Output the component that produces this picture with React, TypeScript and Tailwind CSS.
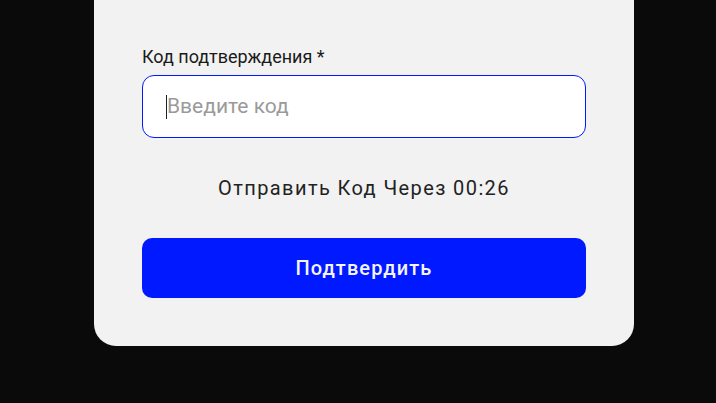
import { useState } from "react";

export default function App() {
  const [code, setCode] = useState("");

  return (
    <div
      className="h-[403px] w-full bg-[#0a0a0a] flex overflow-hidden"
      style={{ fontFamily: "Roboto, 'Noto Sans', sans-serif" }}
    >
      <div className="ml-[94px] w-[540px] h-[346px] bg-[#f2f2f2] rounded-b-[22px] px-[48px] pt-[45px] flex flex-col">
        <label className="text-[18px] leading-[24px] text-[#1a1a1a]">Код подтверждения *</label>
        <div className="mt-[6px] h-[63px] rounded-[12px] border border-[#0019ff] bg-white flex items-center pl-[23px] pr-4">
          <span className="w-px h-[24px] bg-[#222] shrink-0" />
          <input
            value={code}
            onChange={(e) => setCode(e.target.value)}
            placeholder="Введите код"
            className="flex-1 bg-transparent outline-none text-[21px] text-[#222] placeholder:text-[#9a9a9a]"
          />
        </div>
        <div className="mt-[37px] text-center text-[20px] leading-[26px] tracking-[1.4px] text-[#222]">
          Отправить Код Через 00:26
        </div>
        <button className="mt-[37px] h-[60px] w-full rounded-[10px] bg-[#0019ff] text-[#f4f4ff] text-[20px] font-medium tracking-[1.1px]">
          Подтвердить
        </button>
      </div>
    </div>
  );
}
